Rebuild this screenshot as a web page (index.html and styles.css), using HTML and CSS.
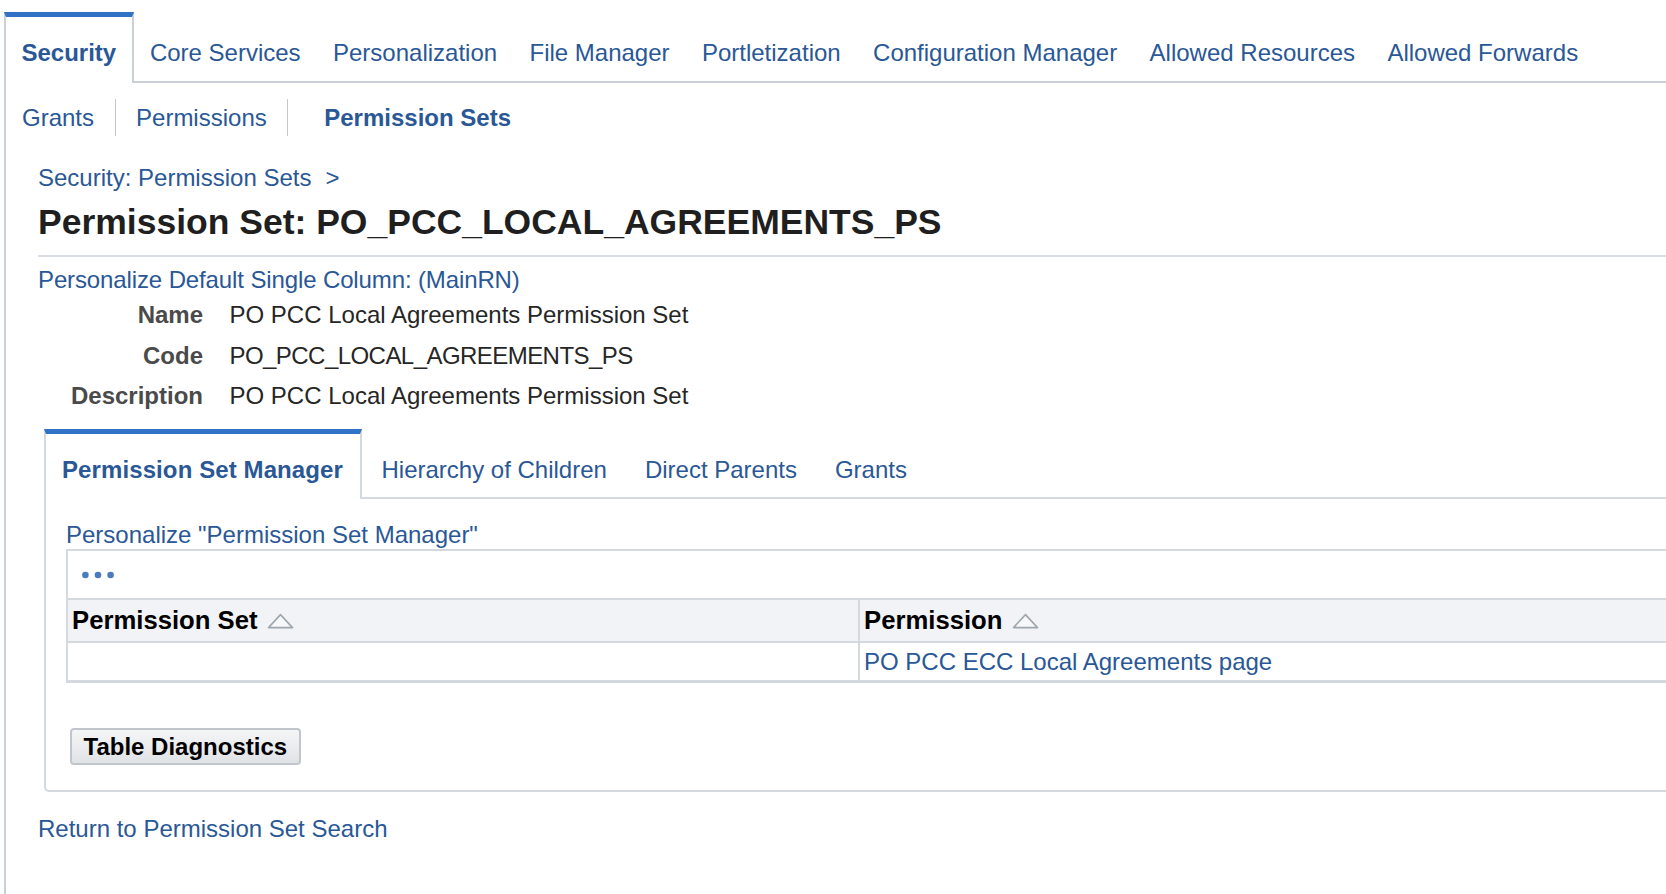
FILE: index.html
```html
<!DOCTYPE html>
<html lang="en">
<head>
<meta charset="utf-8">
<title>Permission Set: PO_PCC_LOCAL_AGREEMENTS_PS</title>
<link rel="stylesheet" href="styles.css">
</head>
<body>
<div class="shell">
  <nav class="tabs">
    <span class="tab tab--active">Security</span>
    <a class="tab" href="#">Core Services</a>
    <a class="tab" href="#">Personalization</a>
    <a class="tab" href="#">File Manager</a>
    <a class="tab" href="#">Portletization</a>
    <a class="tab" href="#">Configuration Manager</a>
    <a class="tab" href="#">Allowed Resources</a>
    <a class="tab" href="#">Allowed Forwards</a>
  </nav>
  <nav class="subtabs">
    <a class="subtab subtab--first" href="#">Grants</a>
    <span class="sep"></span>
    <a class="subtab" href="#">Permissions</a>
    <span class="sep"></span>
    <span class="subtab subtab--active">Permission Sets</span>
  </nav>
  <main class="content">
    <div class="crumbs"><a href="#">Security: Permission Sets</a><span class="crumb-sep">&gt;</span></div>
    <h1 class="title">Permission Set: PO_PCC_LOCAL_AGREEMENTS_PS</h1>
    <hr class="rule">
    <a class="personalize personalize--tight" href="#">Personalize Default Single Column: (MainRN)</a>
    <dl class="fields">
      <dt>Name</dt><dd>PO PCC Local Agreements Permission Set</dd>
      <dt>Code</dt><dd class="code">PO_PCC_LOCAL_AGREEMENTS_PS</dd>
      <dt>Description</dt><dd>PO PCC Local Agreements Permission Set</dd>
    </dl>
    <section class="panel">
      <nav class="ptabs">
        <span class="ptab ptab--active">Permission Set Manager</span>
        <a class="ptab" href="#">Hierarchy of Children</a>
        <a class="ptab" href="#">Direct Parents</a>
        <a class="ptab" href="#">Grants</a>
      </nav>
      <div class="panel-body">
        <a class="personalize personalize--flush" href="#">Personalize "Permission Set Manager"</a>
        <div class="tbl">
          <div class="tbl-tools">
            <svg class="dots" width="32" height="8" viewBox="0 0 32 8" aria-hidden="true">
              <circle cx="3.4" cy="4" r="3.3" fill="#4a7bbf"/>
              <circle cx="16" cy="4" r="3.3" fill="#4a7bbf"/>
              <circle cx="28.6" cy="4" r="3.3" fill="#4a7bbf"/>
            </svg>
          </div>
          <div class="grid">
            <div class="th">Permission Set<svg class="sort" width="27" height="16" viewBox="0 0 27 16" aria-hidden="true"><polygon points="1.5,14.6 13.5,1.6 25.5,14.6" fill="#f7f8f9" stroke="#9ea6ae" stroke-width="1.6" stroke-linejoin="round"/></svg></div>
            <div class="th">Permission<svg class="sort" width="27" height="16" viewBox="0 0 27 16" aria-hidden="true"><polygon points="1.5,14.6 13.5,1.6 25.5,14.6" fill="#f7f8f9" stroke="#9ea6ae" stroke-width="1.6" stroke-linejoin="round"/></svg></div>
            <div class="td"></div>
            <div class="td"><a href="#">PO PCC ECC Local Agreements page</a></div>
          </div>
        </div>
        <button class="btn" type="button">Table Diagnostics</button>
      </div>
    </section>
    <a class="return" href="#">Return to Permission Set Search</a>
  </main>
</div>
</body>
</html>
```

FILE: styles.css
```css
html, body {
  margin: 0;
  padding: 0;
  overflow: hidden;
  background: #ffffff;
}

body {
  font-family: "Liberation Sans", Arial, Helvetica, sans-serif;
  font-size: 24px;
  color: #222222;
}

a {
  color: #2a5896;
  text-decoration: none;
}

.shell {
  margin: 12px 0 0 4px;
  border-left: 2px solid #c9d0d8;
  min-height: calc(100vh - 12px);
  box-sizing: border-box;
}

/* Top level tabs */
.tabs {
  display: flex;
  align-items: flex-end;
  border-bottom: 2px solid #c9d0d8;
  height: 69px;
}

.tab {
  padding: 22px 16.2px 14px;
  line-height: 28px;
  border-top: 5px solid transparent;
  white-space: nowrap;
  color: #2a5896;
}

.tab--active {
  font-weight: bold;
  border-top-color: #3172c7;
  border-left: 2px solid #c9d0d8;
  border-right: 2px solid #c9d0d8;
  margin-left: -2px;
  margin-bottom: -2px;
  padding: 22px 15.5px 16px 15.5px;
  background: #ffffff;
}

/* Sub tabs */
.subtabs {
  display: flex;
  align-items: stretch;
  margin-top: 16px;
  height: 37px;
  padding-left: 16px;
}

.subtab {
  line-height: 37px;
  padding: 0 20.5px;
  white-space: nowrap;
  color: #2a5896;
}

.subtab--first {
  padding-left: 0;
}

.subtab--active {
  font-weight: bold;
  padding-left: 36px;
}

.sep {
  width: 1px;
  background: #c3cad2;
}

/* Main content */
.content {
  padding-left: 32px;
}

.crumbs {
  margin-top: 28px;
  line-height: 28px;
  color: #2a5896;
}

.crumb-sep {
  margin-left: 14px;
}

.title {
  margin: 10px 0 0;
  font-size: 35.5px;
  line-height: 40px;
  font-weight: bold;
  color: #1f1f1f;
}

.rule {
  margin: 13px 0 0;
  border: 0;
  border-top: 2px solid #d8dee4;
  height: 0;
}

.personalize {
  display: block;
  margin-top: 9px;
  line-height: 28px;
}

.personalize--tight {
  letter-spacing: -0.12px;
}

.personalize--flush {
  margin-top: 0;
}

.fields {
  display: grid;
  grid-template-columns: 165px 1fr;
  column-gap: 26.5px;
  row-gap: 12.6px;
  margin: 7px 0 0;
  line-height: 28px;
}

.fields dt {
  text-align: right;
  font-weight: bold;
  color: #4a4a4a;
}

.fields dd {
  margin: 0;
  color: #262626;
}

.fields .code {
  letter-spacing: -0.55px;
}

/* Sub tab panel */
.panel {
  margin: 19px 0 0 6px;
  border-left: 2px solid #d3d9df;
  border-bottom: 2px solid #d3d9df;
  border-bottom-left-radius: 5px;
}

.ptabs {
  display: flex;
  align-items: flex-end;
  border-bottom: 2px solid #d3d9df;
  height: 68px;
}

.ptab {
  padding: 22px 19px 13px;
  line-height: 28px;
  border-top: 5px solid transparent;
  white-space: nowrap;
  color: #2a5896;
}

.ptab--active {
  font-weight: bold;
  border-top-color: #3172c7;
  border-left: 2px solid #d3d9df;
  border-right: 2px solid #d3d9df;
  margin-left: -2px;
  margin-bottom: -2px;
  padding: 22px 17.5px 15px 16px;
  background: #ffffff;
  letter-spacing: 0.1px;
}

.panel-body {
  padding: 22px 0 25px 20px;
}

/* Table */
.tbl {
  border-top: 2px solid #d3d9df;
  border-left: 2px solid #d3d9df;
  border-bottom: 3px solid #d3d9df;
}

.tbl-tools {
  height: 47px;
  display: flex;
  align-items: center;
  padding-left: 14px;
}

.dots {
  display: block;
}

.grid {
  display: grid;
  grid-template-columns: 789.5px 1fr;
}

.th {
  background: #f2f3f6;
  border-top: 2px solid #d3d9df;
  border-bottom: 2px solid #d3d9df;
  line-height: 41px;
  padding-left: 4px;
  font-weight: bold;
  font-size: 25.7px;
  color: #000000;
  white-space: nowrap;
}

.td {
  line-height: 37px;
  padding-left: 3px;
  white-space: nowrap;
}

.th + .th,
.td + .td {
  border-left: 2px solid #d3d9df;
  padding-left: 4.5px;
}

.sort {
  margin-left: 9.5px;
  vertical-align: baseline;
}

/* Button */
.btn {
  display: block;
  margin: 45px 0 0 4px;
  padding: 0 11.5px;
  height: 37px;
  box-sizing: border-box;
  font: bold 24px "Liberation Sans", Arial, Helvetica, sans-serif;
  line-height: 33px;
  color: #000000;
  background: linear-gradient(#f4f5f6, #e0e3e6);
  border: 2px solid #c0c6cc;
  border-radius: 4px;
}

.return {
  display: block;
  margin-top: 23px;
  line-height: 28px;
}
```
